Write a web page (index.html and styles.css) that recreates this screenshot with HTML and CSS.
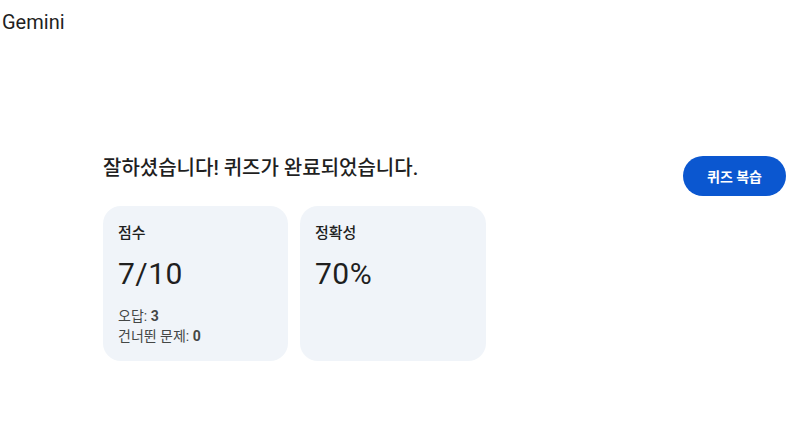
FILE: index.html
```html
<!DOCTYPE html>
<html lang="ko">
<head>
<meta charset="utf-8">
<link rel="stylesheet" href="styles.css">
</head>
<body>
<header class="top">Gemini</header>
<main class="main">
  <div class="head-row">
    <h1 class="title">잘하셨습니다! 퀴즈가 완료되었습니다.</h1>
    <button class="review">퀴즈 복습</button>
  </div>
  <div class="cards">
    <section class="card">
      <div class="label">점수</div>
      <div class="value">7/10</div>
      <div class="meta">오답: <b>3</b></div>
      <div class="meta">건너뛴 문제: <b>0</b></div>
    </section>
    <section class="card">
      <div class="label">정확성</div>
      <div class="value">70%</div>
    </section>
  </div>
</main>
</body>
</html>
```
FILE: styles.css
```css
html, body {
  margin: 0;
  padding: 0;
  background: #ffffff;
}
body {
  font-family: Roboto, "Noto Sans CJK KR", sans-serif;
  color: #1f1f1f;
}
.top {
  font-size: 20px;
  padding: 9px 0 0 2px;
  height: 30px;
  line-height: 26px;
  color: #1f1f1f;
}
.main {
  padding: 117px 13px 0 103px;
}
.head-row {
  display: flex;
  align-items: flex-start;
  justify-content: space-between;
  height: 40px;
}
.title {
  margin: -2px 0 0 0;
  font-size: 20px;
  font-weight: 500;
  line-height: 28px;
}
.review {
  height: 40px;
  width: 103px;
  border: none;
  border-radius: 20px;
  background: #0b57d0;
  color: #fff;
  font-family: Roboto, "Noto Sans CJK KR", sans-serif;
  font-size: 14px;
  font-weight: 700;
}
.cards {
  display: grid;
  grid-template-columns: 185px 186px;
  gap: 12px;
  margin-top: 10px;
}
.card {
  height: 155px;
  box-sizing: border-box;
  background: #f0f4f9;
  border-radius: 18px;
  padding: 17px 15px;
}
.label {
  font-size: 15px;
  font-weight: 500;
  line-height: 20px;
}
.value {
  font-size: 30px;
  line-height: 36px;
  margin-top: 13px;
  margin-bottom: 14px;
  font-weight: 400;
  letter-spacing: 0.5px;
}
.meta {
  font-size: 14px;
  line-height: 20px;
  color: #444746;
}
.meta b {
  font-weight: 700;
}
```
